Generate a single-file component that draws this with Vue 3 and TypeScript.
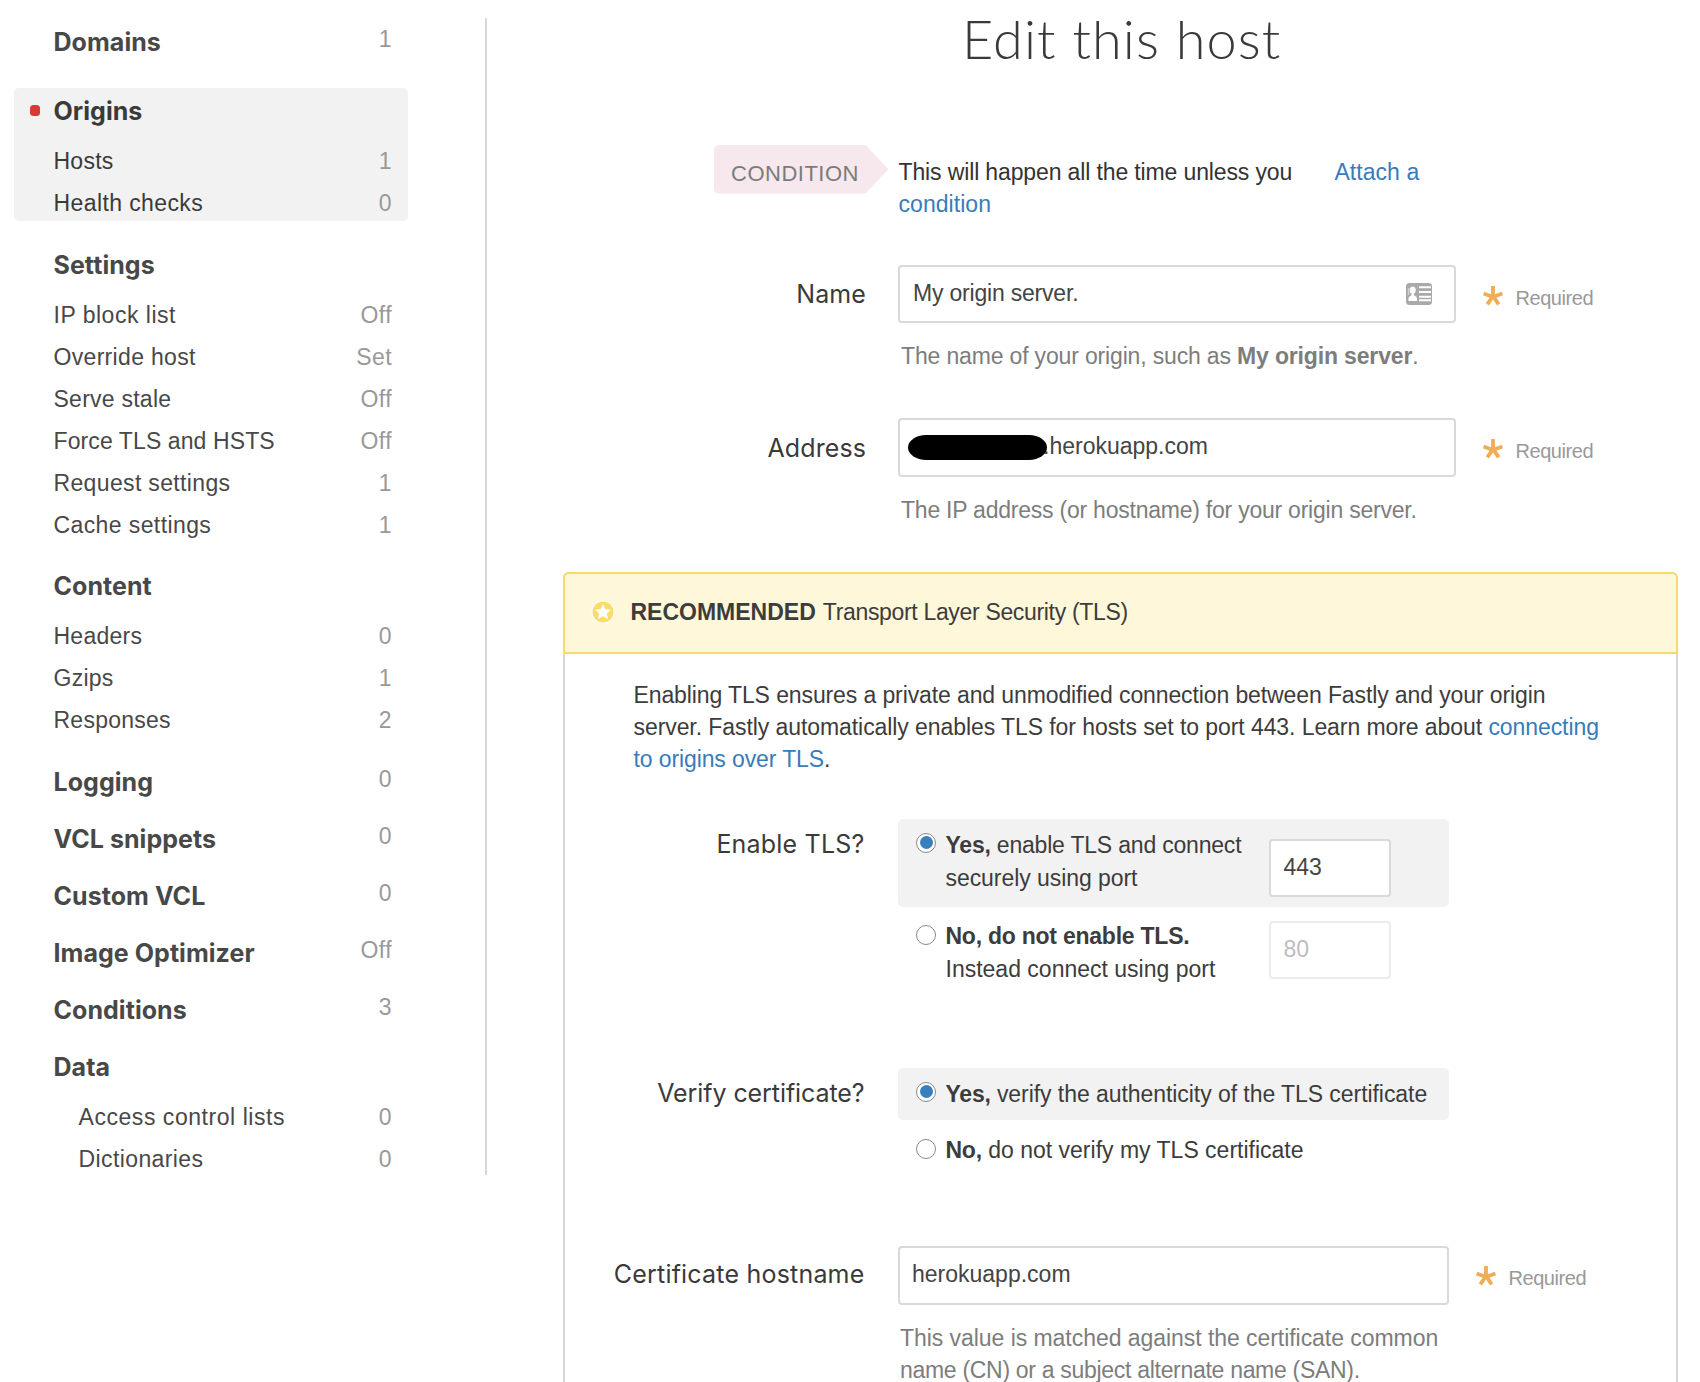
<script setup lang="ts">
import { ref } from 'vue'

interface NavItem {
  label: string
  value: string
  tracking?: number
}

interface NavGroup {
  title: string
  value?: string
  active?: boolean
  indented?: boolean
  items?: NavItem[]
}

const groups: NavGroup[] = [
  { title: 'Domains', value: '1' },
  {
    title: 'Origins',
    active: true,
    items: [
      { label: 'Hosts', value: '1' },
      { label: 'Health checks', value: '0', tracking: 0.4 },
    ],
  },
  {
    title: 'Settings',
    items: [
      { label: 'IP block list', value: 'Off', tracking: 0.5 },
      { label: 'Override host', value: 'Set', tracking: 0.32 },
      { label: 'Serve stale', value: 'Off' },
      { label: 'Force TLS and HSTS', value: 'Off', tracking: 0.1 },
      { label: 'Request settings', value: '1', tracking: 0.35 },
      { label: 'Cache settings', value: '1', tracking: 0.4 },
    ],
  },
  {
    title: 'Content',
    items: [
      { label: 'Headers', value: '0' },
      { label: 'Gzips', value: '1' },
      { label: 'Responses', value: '2' },
    ],
  },
  { title: 'Logging', value: '0' },
  { title: 'VCL snippets', value: '0' },
  { title: 'Custom VCL', value: '0' },
  { title: 'Image Optimizer', value: 'Off' },
  { title: 'Conditions', value: '3' },
  {
    title: 'Data',
    indented: true,
    items: [
      { label: 'Access control lists', value: '0', tracking: 0.55 },
      { label: 'Dictionaries', value: '0', tracking: 0.4 },
    ],
  },
]

const enableTls = ref(true)
const verifyCert = ref(true)
</script>

<template>
  <div class="page">
    <nav class="sidebar">
      <section
        v-for="group in groups"
        :key="group.title"
        class="group"
        :class="{ active: group.active, indented: group.indented, spaced: group.items || group.title === 'Domains' }"
      >
        <div class="nav-heading">
          <span v-if="group.active" class="dot"></span>
          <span class="nav-title">{{ group.title }}</span>
          <span class="nav-value">{{ group.value }}</span>
        </div>
        <div v-for="item in group.items" :key="item.label" class="nav-item">
          <span class="nav-label" :style="{ letterSpacing: (item.tracking ?? 0.25) + 'px' }">{{ item.label }}</span>
          <span class="nav-value">{{ item.value }}</span>
        </div>
      </section>
    </nav>
    <div class="divider"></div>

    <main class="main">
      <h1 class="title">Edit this host</h1>

      <div class="condition">
        <div class="tag">CONDITION</div>
        <p class="condition-text">This will happen all the time unless you <a class="attach">Attach a condition</a></p>
      </div>

      <div class="row row-name">
        <label class="label">Name</label>
        <div>
          <div class="control">
            <div class="input wide">
              <span class="tight">My origin server.</span>
              <svg class="card" width="26" height="22" viewBox="0 0 26 22">
                <rect width="26" height="22" rx="3.5" fill="#a9a9a9" />
                <ellipse cx="6.7" cy="7.2" rx="3" ry="3.6" fill="#fff" />
                <path d="M2.5 18v-2.200q0-2.600 3-3.400v-2h2.500v2q3 .8 3 3.400V18z" fill="#fff" />
                <path d="M2.500 5v7" stroke="#d2d2d2" stroke-width="1.500" />
                <path d="M13 4.200h12M13 9.100h12M13 13.700h12M13 17.300h12" stroke="#fff" stroke-width="2" />
              </svg>
            </div>
            <div class="required">
              <svg width="20" height="20" viewBox="0 0 20 20">
                <path d="M10 11V0M10 11 .6 7.500M10 11l9.400-3.500M10 10 4.300 18.400M10 10l5.700 8.400" stroke="#f0ad56" stroke-width="3.800" fill="none" />
              </svg>
              <span>Required</span>
            </div>
          </div>
          <p class="hint hint-name">The name of your origin, such as <b>My origin server</b>.</p>
        </div>
      </div>

      <div class="row row-address">
        <label class="label label-address">Address</label>
        <div>
          <div class="control">
            <div class="input wide redacted">
              <span class="redaction"></span>
              <span class="domain">.herokuapp.com</span>
            </div>
            <div class="required">
              <svg width="20" height="20" viewBox="0 0 20 20">
                <path d="M10 11V0M10 11 .6 7.500M10 11l9.400-3.500M10 10 4.300 18.400M10 10l5.700 8.400" stroke="#f0ad56" stroke-width="3.800" fill="none" />
              </svg>
              <span>Required</span>
            </div>
          </div>
          <p class="hint hint-address">The IP address (or hostname) for your origin server.</p>
        </div>
      </div>

      <section class="panel">
        <header class="panel-head">
          <svg class="star" width="24" height="24" viewBox="0 0 24 24">
            <circle cx="12" cy="12" r="11.600" fill="#fffdf2" />
            <circle cx="12" cy="12" r="10.500" fill="#f8dc70" />
            <path d="M12 4.800l2.100 4.700 5.200.5-3.900 3.400 1.100 5L12 15.800l-4.500 2.600 1.100-5L4.700 10l5.200-.5z" fill="#fff" stroke="#fff" stroke-width=".8" stroke-linejoin="round" />
          </svg>
          <b class="recommended">RECOMMENDED</b>
          <span class="tls-name">Transport Layer Security (TLS)</span>
        </header>

        <p class="intro">
          Enabling TLS ensures a private and unmodified connection between Fastly and your origin<br />
          <span class="intro-second">server. Fastly automatically enables TLS for hosts set to port 443. Learn more about <a>connecting</a></span><br />
          <a>to origins over TLS</a>.
        </p>

        <div class="row inner row-tls">
          <label class="label label-tls">Enable TLS?</label>
          <div class="options">
            <div class="option tall" :class="{ selected: enableTls }" @click="enableTls = true">
              <span class="radio" :class="{ checked: enableTls }"></span>
              <p class="option-text"><b>Yes,</b><span class="tight"> enable TLS and connect</span><br />securely using port</p>
              <div class="input port">443</div>
            </div>
            <div class="option second" :class="{ selected: !enableTls }" @click="enableTls = false">
              <span class="radio" :class="{ checked: !enableTls }"></span>
              <p class="option-text"><b>No, do not enable TLS.</b><br /><span class="instead">Instead connect using port</span></p>
              <div class="input port disabled">80</div>
            </div>
          </div>
        </div>

        <div class="row inner row-verify">
          <label class="label label-verify">Verify certificate?</label>
          <div class="options">
            <div class="option short" :class="{ selected: verifyCert }" @click="verifyCert = true">
              <span class="radio" :class="{ checked: verifyCert }"></span>
              <p class="option-text"><b>Yes,</b> verify the authenticity of the TLS certificate</p>
            </div>
            <div class="option second last" :class="{ selected: !verifyCert }" @click="verifyCert = false">
              <span class="radio" :class="{ checked: !verifyCert }"></span>
              <p class="option-text"><b>No,</b><span class="instead"> do not verify my TLS certificate</span></p>
            </div>
          </div>
        </div>

        <div class="row inner row-cert">
          <label class="label label-cert">Certificate hostname</label>
          <div>
            <div class="control">
              <div class="input medium">herokuapp.com</div>
              <div class="required">
                <svg width="20" height="20" viewBox="0 0 20 20">
                  <path d="M10 11V0M10 11 .6 7.500M10 11l9.400-3.500M10 10 4.300 18.400M10 10l5.700 8.400" stroke="#f0ad56" stroke-width="3.800" fill="none" />
                </svg>
                <span>Required</span>
              </div>
            </div>
            <p class="hint hint-cert">
              This value is matched against the certificate common<br /><span class="san">name (CN) or a subject alternate name (SAN).</span>
            </p>
          </div>
        </div>
      </section>
    </main>
  </div>
</template>

<style>
body {
  margin: 0;
  background: #fff;
}
</style>

<style scoped>
.page {
  display: flex;
  align-items: flex-start;
  width: 1700px;
  height: 1382px;
  overflow: hidden;
  background: #fff;
  color: #3c3c3c;
  font-family: 'Liberation Sans', Arial, sans-serif;
  font-size: 23px;
  line-height: 32px;
}
p,
h1 {
  margin: 0;
}
a {
  color: #377cba;
}

/* Sidebar */
.sidebar {
  width: 485px;
  padding-top: 12.7px;
  flex: none;
}
.group {
  position: relative;
  padding: 0 93px 0 53.5px;
}
.group.spaced {
  margin-bottom: 12.8px;
}
.group.active::before {
  content: '';
  position: absolute;
  inset: 5.3px 77px 2px 14px;
  border-radius: 5px;
  background: #f2f2f2;
}
.nav-heading {
  position: relative;
  display: flex;
  justify-content: space-between;
  height: 57px;
}
.nav-title {
  font-family: Inter, sans-serif;
  font-size: 25px;
  font-weight: 700;
  line-height: 58.4px;
  letter-spacing: 0.05px;
  color: #484848;
}
.active .nav-title {
  color: #3a3a3a;
}
.nav-heading .nav-value {
  line-height: 53px;
}
.dot {
  position: absolute;
  left: -23.5px;
  top: 23px;
  width: 10px;
  height: 11px;
  border-radius: 3.5px;
  background: #d93a32;
}
.nav-item {
  position: relative;
  display: flex;
  justify-content: space-between;
  height: 41.9px;
  line-height: 45.5px;
  color: #484848;
}
.active .nav-item {
  color: #3a3a3a;
}
.indented .nav-item {
  padding-left: 25px;
}
.nav-value {
  letter-spacing: 0.45px;
  color: #999;
}
.divider {
  width: 2px;
  height: 1157px;
  margin-top: 18px;
  flex: none;
  background: #d8d8d8;
}

/* Form */
.main {
  flex: none;
  width: 1213px;
}
.title {
  margin-top: 4px;
  padding-left: 475px;
  font-family: Lato, sans-serif;
  font-size: 54px;
  font-weight: 300;
  line-height: 70px;
  letter-spacing: 1.1px;
  color: #3a3a3a;
}
.condition {
  display: flex;
  align-items: flex-start;
  height: 120px;
  margin-top: 71px;
  padding-left: 227px;
}
.tag {
  flex: none;
  box-sizing: border-box;
  width: 174.5px;
  height: 48.5px;
  padding: 5px 0 0 17px;
  border-radius: 5px 0 0 5px;
  background: #f7e8ed;
  clip-path: polygon(0 0, 151.5px 0, 100% 50%, 151.5px 100%, 0 100%);
  font-size: 22px;
  line-height: 48px;
  letter-spacing: 0.5px;
  color: #7b7b7b;
}
.condition-text {
  width: 555px;
  margin: 10.5px 0 0 10px;
  letter-spacing: -0.13px;
  color: #333;
}
.attach {
  margin-left: 36px;
  letter-spacing: 0.05px;
}
.row {
  display: grid;
  grid-template-columns: 379px 1fr;
  column-gap: 32px;
  align-items: start;
}
.row-name {
  height: 153px;
}
.row-address {
  height: 154px;
}
.label {
  padding-top: 13px;
  text-align: right;
  font-family: Inter, sans-serif;
  font-size: 25px;
  letter-spacing: 0.1px;
  color: #3a3a3a;
}
.label-address {
  padding-top: 14px;
}
.control {
  display: flex;
  align-items: flex-start;
}
.input {
  display: flex;
  justify-content: space-between;
  box-sizing: border-box;
  height: 58px;
  padding: 0 13px;
  border: 2px solid #d9d9d9;
  border-radius: 4px;
  background: #fff;
  line-height: 52px;
  color: #444;
}
.wide {
  width: 558px;
  padding: 0 22px 0 13px;
}
.tight {
  letter-spacing: -0.2px;
}
.card {
  margin: 16px 0 0;
}
.redacted {
  height: 59px;
  justify-content: flex-start;
  padding-left: 8px;
}
.redaction {
  position: relative;
  z-index: 1;
  width: 139px;
  height: 25px;
  margin-top: 15px;
  border-radius: 18px / 12.5px;
  background: #000;
}
.domain {
  margin-left: -4px;
  letter-spacing: 0;
}
.required {
  display: flex;
  padding: 20.5px 0 0 26.5px;
  font-size: 20px;
  line-height: 24px;
  letter-spacing: -0.45px;
  color: #999;
}
.required span {
  margin-left: 13px;
}
.hint {
  padding: 17px 0 0 3px;
  color: #7d7d7d;
}
.hint-name {
  letter-spacing: -0.16px;
}
.hint-address {
  letter-spacing: -0.23px;
}
.hint-cert {
  padding: 17px 0 0 2px;
  letter-spacing: -0.05px;
}
.san {
  letter-spacing: -0.3px;
}

/* TLS panel */
.panel {
  box-sizing: border-box;
  width: 1115px;
  height: 900px;
  margin-left: 76px;
  border: 2px solid #d6d6d6;
  border-radius: 6px 6px 0 0;
}
.panel-head {
  display: flex;
  box-sizing: border-box;
  height: 82px;
  margin: -2px -2px 0;
  padding-left: 25.5px;
  border: 2px solid #f6da6c;
  border-radius: 6px 6px 0 0;
  background: #fff7d9;
  line-height: 77px;
}
.star {
  margin-top: 26px;
}
.recommended {
  margin-left: 16px;
}
.tls-name {
  margin-left: 7px;
  letter-spacing: -0.33px;
}
.intro {
  padding: 24.500px 0 0 68.5px;
  line-height: 32.1px;
  letter-spacing: -0.11px;
  white-space: nowrap;
}
.intro-second {
  letter-spacing: -0.075px;
}
.inner {
  grid-template-columns: 299.5px 1fr;
  column-gap: 33.5px;
}
.row-tls {
  height: 249px;
  margin-top: 44px;
}
.row-verify {
  height: 178px;
}
.label-tls {
  padding-top: 9px;
  letter-spacing: 0.2px;
}
.label-verify {
  padding-top: 9px;
  letter-spacing: -0.08px;
}
.label-cert {
  padding-top: 12px;
  letter-spacing: 0.2px;
}
.options {
  width: 551px;
}
.option {
  display: flex;
  align-items: flex-start;
  padding-left: 18px;
  border-radius: 5px;
}
.selected {
  background: #f2f2f2;
}
.tall {
  height: 88px;
}
.short {
  height: 52px;
}
.radio {
  display: flex;
  align-items: center;
  justify-content: center;
  flex: none;
  box-sizing: border-box;
  width: 20px;
  height: 20px;
  margin-top: 14px;
  border: 1.5px solid #8a8a8a;
  border-radius: 50%;
  background: #fff;
}
.checked::after {
  content: '';
  width: 13px;
  height: 13px;
  border-radius: 50%;
  background: #3a7fbd;
}
.option-text {
  width: 323px;
  margin: 10.500px 0 0 9.5px;
  line-height: 32.300px;
  letter-spacing: -0.06px;
  white-space: nowrap;
}
.option b {
  letter-spacing: -0.24px;
}
.instead {
  letter-spacing: 0;
}
.port {
  flex: none;
  width: 122px;
  margin-top: 20px;
}
.second .radio {
  margin-top: 18px;
}
.second .option-text {
  margin-top: 13.5px;
}
.last .radio {
  margin-top: 19px;
}
.last .option-text {
  margin-top: 14.5px;
}
.second .port {
  margin-top: 14px;
}
.disabled {
  border-color: #ebebeb;
  color: #bdbdbd;
}
.medium {
  width: 551px;
  height: 59px;
  padding-left: 12px;
}
</style>
